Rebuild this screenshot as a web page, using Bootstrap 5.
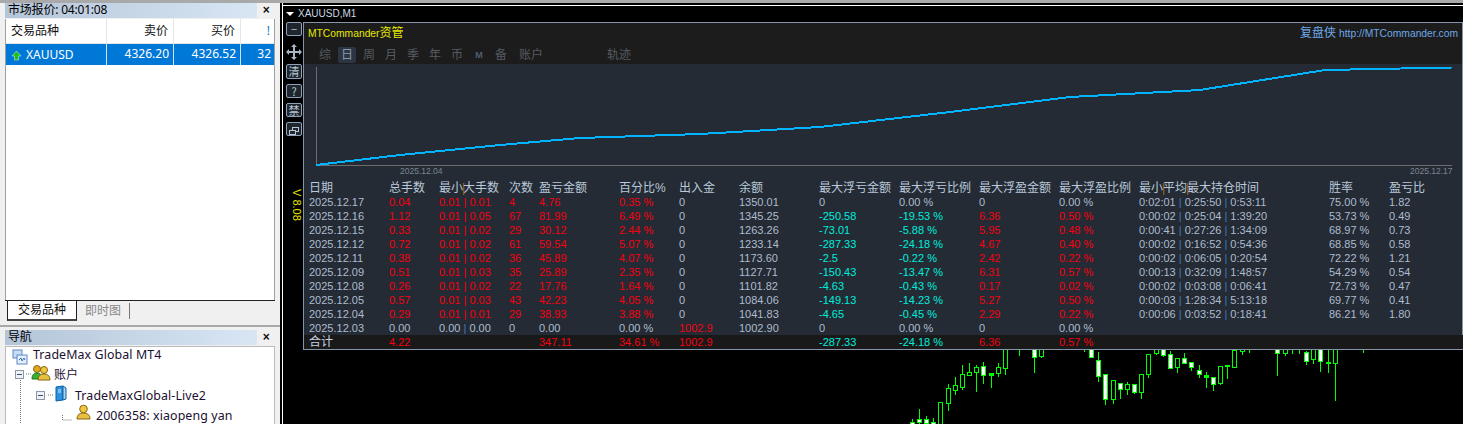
<!DOCTYPE html>
<html lang="zh"><head><meta charset="utf-8"><title>MT4</title>
<link href="https://cdn.jsdelivr.net/npm/bootstrap@5.3.0/dist/css/bootstrap.min.css" rel="stylesheet">
<style>
html,body{height:424px;overflow:hidden;background:#000}
body{font:12px/14px "Noto Sans","Noto Sans CJK SC",sans-serif;color:#111}
.lp{width:280px;height:424px;background:#f0f0f0;border-top:3px solid #a9a9a9;flex:none}
.ttl{height:15px;margin:0 5px 1px 5px;display:flex}
.ttl>div{width:256px;background:linear-gradient(90deg,#b4c5d9,#d8e6f4);padding-left:3px;line-height:14px;font-size:12px;letter-spacing:-.2px;color:#000}
.ttl b{width:18px;text-align:center;font:bold 12px/14px "Liberation Sans",sans-serif}
.mw{height:281px;margin:0 5px;border:1px solid #a0a0a0;border-top:0;border-bottom:0;background:#fff;width:270px}
.mh,.mr{display:grid;grid-template-columns:101px 67px 67px 34px}
.mh{height:25px;line-height:24px;border-bottom:1px solid #e5e5e5}
.mh>div{border-right:1px solid #e5e5e5;padding:0 5px}
.mr{height:21px;line-height:20px;background:#0078d7;color:#fff}
.mr>div{border-right:1px solid #cfe3f5;padding:0 4px;white-space:nowrap}
.tr{text-align:right}.tl{text-align:left}
.tabs{height:23px;margin-left:5px;width:270px;border-top:1px solid #222;display:flex;padding-left:2px}
.tb1{width:70px;height:20px;background:#fff;border:1px solid #222;border-top:0;border-bottom:2px solid #444;text-align:center;line-height:18px;font-size:12px}
.tb2{width:53px;height:16px;margin-top:2px;border-right:1px solid #777;text-align:center;color:#888;line-height:16px}
.sep{border-top:2px solid #a9a9a9;margin:2px 0 3px 0;height:1px}
.nav2{margin:0 5px;width:270px;height:90px;background:#fff;border:1px solid #bbb;border-bottom:0;position:relative;color:#1a1030;font-size:12.4px;letter-spacing:.1px}
.nd{position:absolute;white-space:nowrap;line-height:16px}
.ic{position:absolute}
.rp{flex:1;background:#000;min-width:0;padding-left:2px;border-top:3px solid #a9a9a9}
.win{height:421px;border-left:1px solid #fff;display:flex;flex-direction:column}
.wt{height:22px;margin-top:2px;border-top:1px solid #fff;padding:0 0 0 3px;color:#ccd8e4;font:10px/13px "Liberation Sans",sans-serif;flex:none;display:flex;align-items:flex-start;gap:4px;padding-top:1px}
.wt i{border:4px solid transparent;border-top:4px solid #fff;margin-top:5px}
.wb{display:flex;height:328px;flex:none;margin-top:-5px}
.tool{width:20px;flex:none;padding:0 0 0 3px;position:relative}
.tbn{width:16px;height:14px;border:1px solid #8fa2b8;border-radius:2px;color:#b8c6d6;font:11px/12px "Noto Sans CJK SC",sans-serif;text-align:center;background:#20262e;margin-bottom:6px;overflow:hidden}
.ver{position:absolute;left:7px;top:167px;color:#e6e600;font:11px/14px "Liberation Sans",sans-serif;writing-mode:vertical-rl}
.pan{flex:1;border:1px solid #8394ab;background:#242b34;min-width:0;position:relative;font-family:"Liberation Sans","Noto Sans CJK SC",sans-serif}
.phd{background:#1c1c1c;height:41px;position:relative}
.brand{position:absolute;left:4px;top:3px;color:#e8e800;line-height:15px;font-size:10.3px}
.site{position:absolute;right:4px;top:3px;color:#6fa8e6;line-height:15px;font-size:10.3px}
.brand span,.site span{font-size:12px}
.pt{display:flex;position:absolute;left:10px;top:24px;color:#565b61;line-height:16px}
.pt span{width:22px;text-align:center;font-size:12px}
.pt .on{background:#2b3543;color:#8a99aa;border-radius:2px;height:16px;width:18px;margin:0 2px}
.pt .m{font-size:9px;font-weight:bold;color:#4d5f75}
.pt .w2{width:36px;margin-left:1px;margin-right:58px}
.pt .w3{width:auto}
.plot{height:117px;display:block}
.dt{font:8.500px "Liberation Sans",sans-serif;fill:#7c8691}
.wtb{table-layout:fixed;width:1159px;border-collapse:collapse;color:#a2b2c8}
.wtb td,.wtb th{padding:0 0 0 5px;height:14px;line-height:14px;font-weight:400;white-space:nowrap;overflow:hidden;font-size:11px}
.wtb th{color:#b9c8da;overflow:visible;font-size:12px}
.wtb .sum td{background:#191919}
.wtb .sum td:first-child{color:#c8d4e2;font-size:12px}
.rd{color:#f40010}.cy{color:#00ecdc}.gy{color:#aebccf}
.bar{display:inline-block;width:0;color:#a06a20;position:relative;left:-1px}
.vb{color:#3f78bc}
.bot{flex:1;min-height:0;overflow:hidden}
.bot svg{display:block}
</style></head><body>
<div class="d-flex">
<div class="lp">
  <div class="ttl"><div>市场报价: 04:01:08</div><b>×</b></div>
  <div class="mw">
    <div class="mh"><div>交易品种</div><div class="tr">卖价</div><div class="tr">买价</div><div class="tr" style="border:0;color:#2277cc">!</div></div>
    <div class="mr"><div class="d-flex align-items-center"><svg width="15" height="12" viewBox="0 0 15 12"><path d="M10.500 2 15 7H12.500V11H8.500V7H6Z" transform="translate(-4)" fill="#1cc01c" stroke="#e8f4e8" stroke-width=".5"/></svg><span style="margin-left:1px">XAUUSD</span></div><div class="tr">4326.20</div><div class="tr">4326.52</div><div class="tr" style="border:0">32</div></div>
  </div>
  <div class="tabs"><div class="tb1">交易品种</div><div class="tb2">即时图</div></div>
  <div class="sep"></div>
  <div class="ttl"><div>导航</div><b>×</b></div>
  <div class="nav2">
    <svg class="ic" style="left:6px;top:2px" width="16" height="16" viewBox="0 0 16 16"><rect x="1" y="1" width="9" height="8" fill="#c8dcf4" stroke="#5a8ac6"/><rect x="5" y="6" width="10" height="9" fill="#e4eefa" stroke="#5a8ac6"/><path d="M7 11l2-2 1 3 2-3 1 2" fill="none" stroke="#4070b0"/></svg>
    <div class="nd" style="left:27px;top:0">TradeMax Global MT4</div>
    <svg class="ic" style="left:10px;top:17px" width="80" height="70" viewBox="0 0 80 70" fill="none" stroke="#777" stroke-dasharray="1 1"><path d="M4.500 14V70M10 10H16M25.500 32V36M32 31H37M46.500 51V56H56"/></svg>
    <svg class="ic" style="left:9px;top:23px" width="10" height="10"><rect x=".5" y=".5" width="8" height="8" fill="#eef1f5" stroke="#8a97a8"/><path d="M2 4.500H7" stroke="#405070"/></svg>
    <svg class="ic" style="left:30px;top:44px" width="10" height="10"><rect x=".5" y=".5" width="8" height="8" fill="#eef1f5" stroke="#8a97a8"/><path d="M2 4.500H7" stroke="#405070"/></svg>
    <svg class="ic" style="left:25px;top:17px" width="20" height="17" viewBox="0 0 20 17"><circle cx="6" cy="5" r="3.500" fill="#e0a820" stroke="#8a6410"/><path d="M1 15q0-6 5-6t5 6Z" fill="#36b036" stroke="#1a7a1a"/><circle cx="13" cy="6" r="3.500" fill="#f0c840" stroke="#8a6410"/><path d="M7 16q0-6 6-6t6 6Z" fill="#e8c040" stroke="#8a6410"/></svg>
    <div class="nd" style="left:48px;top:20px;font-size:12px">账户</div>
    <svg class="ic" style="left:48px;top:38px" width="14" height="17" viewBox="0 0 14 17"><path d="M2 2 9 1V15L2 16Z" fill="#2a90e0" stroke="#1060a0"/><path d="M9 1 12 3V14L9 15Z" fill="#a8d4f4" stroke="#1060a0"/><path d="M4 5H7M4 7H7" stroke="#d8ecfa"/></svg>
    <div class="nd" style="left:69px;top:41px">TradeMaxGlobal-Live2</div>
    <svg class="ic" style="left:70px;top:57px" width="15" height="16" viewBox="0 0 15 16"><circle cx="7.500" cy="5" r="3.800" fill="#f0c840" stroke="#8a6410"/><path d="M1 15q0-6 6.500-6t6.500 6Z" fill="#e8c040" stroke="#8a6410"/></svg>
    <div class="nd" style="left:90px;top:61px">2006358: xiaopeng yan</div>
  </div>
</div>
<div class="rp"><div class="win">
  <div class="wt"><i></i><span>XAUUSD,M1</span></div>
  <div class="wb">
    <div class="tool">
      <div class="tbn" style="margin-bottom:7px">−</div>
      <svg width="16" height="18" viewBox="0 0 16 18" style="display:block;margin-bottom:3px"><path d="M8 1 11 4H9V8H13V6L16 9 13 12V10H9V14H11L8 17 5 14H7V10H3V12L0 9 3 6V8H7V4H5Z" fill="#a9b5c2"/></svg>
      <div class="tbn" style="height:15px;margin-bottom:5px">清</div>
      <div class="tbn" style="margin-bottom:5px">?</div>
      <div class="tbn" style="margin-bottom:5px">禁</div>
      <div class="tbn"><svg width="12" height="10" viewBox="0 0 12 10" fill="none" stroke="#b8c6d6"><rect x="4.500" y="1.500" width="6" height="4"/><rect x="1.500" y="4.500" width="6" height="4" fill="#20262e"/></svg></div>
      <div class="ver">V 8.08</div>
    </div>
    <div class="pan">
      <div class="phd">
        <div class="brand">MTCommander<span>资管</span></div>
        <div class="site"><span>复盘侠</span> http://MTCommander.com</div>
        <div class="pt"><span>综</span><span class="on">日</span><span>周</span><span>月</span><span>季</span><span>年</span><span>币</span><span class="m">M</span><span>备</span><span class="w2">账户</span><span class="w3">轨迹</span></div>
      </div>
      <svg class="plot" width="1159" height="117" viewBox="304 64 1159 117">
        <path d="M316.500 67V165.500H1452" fill="none" stroke="#6d6d6d"/>
        <path d="M316 165 400 155 500 145 580 138 700 134 820 127 950 112 1070 97 1200 90 1325 70 1452 67.500" fill="none" stroke="#00b4ff" stroke-width="2" shape-rendering="crispEdges"/>
        <text class="dt" x="400" y="174">2025.12.04</text><text class="dt" x="1410" y="174">2025.12.17</text>
      </svg>
      <table class="wtb"><colgroup><col style="width:80px"><col style="width:50px"><col style="width:70px"><col style="width:30px"><col style="width:80px"><col style="width:60px"><col style="width:60px"><col style="width:80px"><col style="width:80px"><col style="width:80px"><col style="width:80px"><col style="width:80px"><col style="width:190px"><col style="width:60px"><col></colgroup>
      <thead><tr><th class="tl">日期</th><th>总手数</th><th>最小<span class="bar">|</span>大手数</th><th>次数</th><th>盈亏金额</th><th>百分比%</th><th>出入金</th><th>余额</th><th>最大浮亏金额</th><th>最大浮亏比例</th><th>最大浮盈金额</th><th>最大浮盈比例</th><th>最小<span class="bar">|</span>平均<span class="bar">|</span>最大持仓时间</th><th>胜率</th><th>盈亏比</th></tr></thead>
      <tbody id="tb"></tbody></table>
    </div>
  </div>
  <div class="bot"><svg id="cs" width="1180" height="74"></svg></div>
</div></div>
</div>
<script>
var R=[["2025.12.17","0.04","0.01 | 0.01","4","4.76","0.35 %","0","1350.01","0","0.00 %","0","0.00 %","0:02:01 | 0:25:50 | 0:53:11","75.00 %","1.82"],
["2025.12.16","1.12","0.01 | 0.05","67","81.99","6.49 %","0","1345.25","-250.58","-19.53 %","6.36","0.50 %","0:00:02 | 0:25:04 | 1:39:20","53.73 %","0.49"],
["2025.12.15","0.33","0.01 | 0.02","29","30.12","2.44 %","0","1263.26","-73.01","-5.88 %","5.95","0.48 %","0:00:41 | 0:27:26 | 1:34:09","68.97 %","0.73"],
["2025.12.12","0.72","0.01 | 0.02","61","59.54","5.07 %","0","1233.14","-287.33","-24.18 %","4.67","0.40 %","0:00:02 | 0:16:52 | 0:54:36","68.85 %","0.58"],
["2025.12.11","0.38","0.01 | 0.02","36","45.89","4.07 %","0","1173.60","-2.5","-0.22 %","2.42","0.22 %","0:00:02 | 0:06:05 | 0:20:54","72.22 %","1.21"],
["2025.12.09","0.51","0.01 | 0.03","35","25.89","2.35 %","0","1127.71","-150.43","-13.47 %","6.31","0.57 %","0:00:13 | 0:32:09 | 1:48:57","54.29 %","0.54"],
["2025.12.08","0.26","0.01 | 0.02","22","17.76","1.64 %","0","1101.82","-4.63","-0.43 %","0.17","0.02 %","0:00:02 | 0:03:08 | 0:06:41","72.73 %","0.47"],
["2025.12.05","0.57","0.01 | 0.03","43","42.23","4.05 %","0","1084.06","-149.13","-14.23 %","5.27","0.50 %","0:00:03 | 1:28:34 | 5:13:18","69.77 %","0.41"],
["2025.12.04","0.29","0.01 | 0.01","29","38.93","3.88 %","0","1041.83","-4.65","-0.45 %","2.29","0.22 %","0:00:06 | 0:03:52 | 0:18:41","86.21 %","1.80"],
["2025.12.03","0.00","0.00 | 0.00","0","0.00","0.00 %","1002.9","1002.90","0","0.00 %","0","0.00 %","","",""],
["合计","4.22","","","347.11","34.61 %","1002.9","","-287.33","-24.18 %","6.36","0.57 %","","",""]];
var h="";R.forEach(function(r){h+='<tr'+(r[0]=="合计"?' class="sum"':'')+'>';r.forEach(function(v,i){var c="gy";
 if(v!==""&&parseFloat(v)!==0){if(i>=1&&i<=5||i==10||i==11||i==6)c="rd";if(i==8||i==9)c="cy";}
 if(i==2&&v!==""){v=v.replace(" | ",' <span class="'+(c=="rd"?"rd":"vb")+'">|</span> ');}
 if(i==12&&v!==""){v=v.replace(/ \| /g,' <span class="vb">|</span> ');}
 h+='<td class="'+c+'">'+v+'</td>';});h+='</tr>';});
document.getElementById("tb").innerHTML=h;
var C=[[95,222,237,233,240,1],[116,192,237,225,233,1],[138,213,237,225,237,1],[160,220,237,234,240,1],[181,170,240,174,240,0],[203,117,197,133,176,0],[224,96,150,124,137,0],[246,60,135,91,128,0],[267,54,93,85,92,0],[289,60,140,70,83,0],[310,51,117,67,92,1],[332,88,128,88,92,2],[353,54,95,70,86,0],[375,0,90,0,71,0],[418,0,33],[461,0,83,0,38,1],[482,0,38,0,35,0],[612,0,21],[633,0,38,0,38,1],[655,22,110,49,95,1],[676,90,180,91,164,1],[698,108,177,109,164,0],[719,113,162,118,134,1],[741,111,150,121,134,0],[763,120,147,121,143,1],[784,90,162,91,143,0],[805,28,98,31,89,0],[827,0,30,0,26,0],[848,0,36,0,32,1],[870,18,72,31,71,1],[891,42,84,43,68,0],[913,24,57,43,56,1],[934,55,78,55,68,1],[956,60,99,79,89,1],[977,81,129,94,98,2],[999,99,138,100,119,1],[1020,66,120,67,116,0],[1042,60,102,63,65,2],[1063,0,69,19,68,0],[1085,0,30,0,20,0],[1106,0,24],[1192,0,93,0,26,1],[1214,0,33,0,26,0],[1235,0,27],[1257,0,27],[1278,18,60,25,50,1],[1300,0,57,0,44,0],[1321,0,81,0,52,1],[1343,0,84,54,56,2],[1364,0,168,0,56,0],[1450,0,24]];
var s="",G="#00ff00",top0=15;
C.forEach(function(c){var x=Math.round(880+c[0]/3)-283;function y(v){return Math.round((v-top0)/3)}
 s+='<rect x="'+x+'" y="'+y(c[1])+'" width="1" height="'+Math.max(1,y(c[2])-y(c[1]))+'" fill="'+G+'"/>';
 if(c.length>3){var a=y(c[3]),b=y(c[4]);var f=c[5]==1?"#fff":(c[5]==2?G:"#000");
  s+='<rect x="'+(x-1.5)+'" y="'+(a-.5)+'" width="4" height="'+Math.max(1,b-a)+'" fill="'+f+'" stroke="'+G+'"/>';}});
document.getElementById("cs").innerHTML=s;
</script>
</body></html>
